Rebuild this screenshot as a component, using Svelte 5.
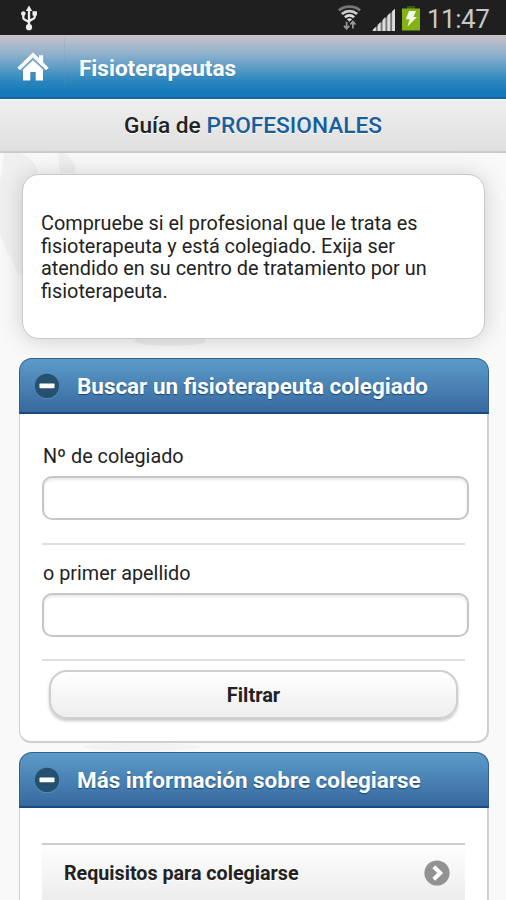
<script lang="ts">
  interface Field {
    id: string;
    label: string;
  }

  const fields: Field[] = [
    { id: 'numero', label: 'Nº de colegiado' },
    { id: 'apellido', label: 'o primer apellido' },
  ];

  const links = ['Requisitos para colegiarse'];

  let values: Record<string, string> = $state({ numero: '', apellido: '' });
</script>

{#snippet minus()}
  <svg class="minus" viewBox="0 0 26 26" aria-hidden="true">
    <circle cx="13" cy="13.8" r="12.2" fill="#82acd0" opacity="0.6" />
    <circle cx="13" cy="13" r="12.2" fill="#26506f" />
    <rect x="5.5" y="10.6" width="15" height="4.6" rx="0.6" fill="#fff" />
  </svg>
{/snippet}

<div class="screen">
  <div class="status">
    <svg class="usb" viewBox="0 0 18 26" aria-hidden="true">
      <g fill="none" stroke="#eee" stroke-width="2.3">
        <path d="M9 5v17M3.3 9v4.2c0 2 5.7 2.2 5.7 5M14.7 8v4.2c0 2-5.7 2.5-5.7 5" />
      </g>
      <path d="M9 0.5 12.2 6H5.8z" fill="#eee" />
      <circle cx="3.3" cy="8.5" r="2.3" fill="#eee" />
      <rect x="12.5" y="6.2" width="4.4" height="4.4" fill="#eee" />
      <circle cx="9" cy="22.2" r="3.1" fill="#eee" />
    </svg>
    <svg class="wifi" viewBox="0 0 26 27" aria-hidden="true">
      <g fill="none" stroke-width="2.8">
        <path d="M2 6.2C8 .9 18 .9 24 6.2" stroke="#777" />
        <path d="M5 9.8c4.8-4 11.2-4 16 0" stroke="#ccc" />
        <path d="M8.2 13.2c3-2.5 6.6-2.5 9.6 0" stroke="#ddd" />
      </g>
      <path d="M10.3 15.2q2.7-2 5.4 0L13 18z" fill="#ddd" />
      <path d="M10 18v6M7.3 22.2l2.7 3 2.7-3M16.5 25v-6M13.8 20.8l2.7-3 2.7 3" fill="none" stroke="#999" stroke-width="1.8" />
    </svg>
    <svg class="signal" viewBox="0 0 24 24" aria-hidden="true">
      <path d="M0 24 24 1v23z" fill="#777" />
      <path d="M1 24v-1.5l3-3V24zM6 24v-6.5l3-3V24zM11 24V12.5l3-3V24zM16 24V8l3-3v19zM21 24V3.5l3-2.8V24z" fill="#ddd" />
    </svg>
    <svg class="battery" viewBox="0 0 20 25" aria-hidden="true">
      <rect x="6" y="0" width="8" height="3" fill="#41551c" />
      <rect x="1" y="2.5" width="18" height="22" fill="#82b314" />
      <path d="M8 5h7l-2.6 6H16L6.5 20.5l2-7.3H4.8z" fill="#f2f7e6" />
    </svg>
    <span class="clock">11:47</span>
  </div>

  <header class="topbar">
    <svg class="home" viewBox="0 0 32 30" aria-hidden="true">
      <path d="M22 3.2h4.2v8L22 7.4z" fill="#fff" />
      <path d="M16 8.2 26 17.6v10.9h-7.3v-8.6h-5.4v8.6H6V17.6z" fill="#fff" />
      <path d="M1.6 17 16 3l14.4 14" fill="none" stroke="#fff" stroke-width="3.8" />
      <path d="M4.2 18.6 16 7.2l11.8 11.4" fill="none" stroke="#9dc0da" stroke-width="0.7" />
    </svg>
    <span class="divider"></span>
    <h1 class="app-name">Fisioterapeutas</h1>
  </header>

  <h2 class="page-title">Guía de <span>PROFESIONALES</span></h2>

  <main class="content">
    <svg class="watermark" viewBox="0 0 240 600" aria-hidden="true">
      <path d="M4 0h16q18 8 18 22l-4 110-16-12L4 92 0 80V30z" fill="#f0f0f0" />
      <path d="M58 0h8l9 12v8H60z" fill="#f0f0f0" />
      <ellipse cx="170" cy="188" rx="36" ry="5" fill="#ededed" />
      <ellipse cx="142" cy="594" rx="58" ry="4" fill="#f2f2f2" />
    </svg>

    <p class="intro">
      Compruebe si el profesional que le trata es fisioterapeuta y está colegiado. Exija ser
      atendido en su centro de tratamiento por un fisioterapeuta.
    </p>

    <section class="panel">
      <h3 class="panel-head">{@render minus()}Buscar un fisioterapeuta colegiado</h3>
      <form class="panel-body search">
        {#each fields as field (field.id)}
          <div class="field">
            <label for={field.id}>{field.label}</label>
            <input id={field.id} type="text" bind:value={values[field.id]} />
          </div>
        {/each}
        <button type="button">Filtrar</button>
      </form>
    </section>

    <section class="panel">
      <h3 class="panel-head">{@render minus()}Más información sobre colegiarse</h3>
      <div class="panel-body">
        <ul class="links">
          {#each links as link (link)}
            <li>
              <span>{link}</span>
              <svg class="chevron" viewBox="0 0 26 26" aria-hidden="true">
                <circle cx="13" cy="13" r="12.6" fill="#929292" />
                <path d="m9.8 6.8 6.4 6.2-6.4 6.2" fill="none" stroke="#fff" stroke-width="4" />
              </svg>
            </li>
          {/each}
        </ul>
      </div>
    </section>
  </main>
</div>

<style>
  :global(body) {
    margin: 0;
    overflow: hidden;
  }

  .screen {
    height: 900px;
    overflow: hidden;
    box-sizing: border-box;
    background: #f9f9f9;
    color: #222;
    font-family: Roboto, 'Liberation Sans', sans-serif;
  }

  h1,
  h2,
  h3,
  p,
  ul {
    margin: 0;
    padding: 0;
  }

  .status {
    display: flex;
    align-items: center;
    height: 35px;
    padding: 0 17px 0 20px;
    background: #1f1f1f;
  }
  .usb {
    width: 18px;
    height: 26px;
    margin-right: auto;
  }
  .wifi {
    width: 25px;
    height: 27px;
    margin-right: 10px;
  }
  .signal {
    width: 23px;
    height: 23px;
    margin: 4px 6px 0 0;
  }
  .battery {
    width: 20px;
    height: 25px;
    margin-top: 1px;
  }
  .clock {
    width: 62px;
    margin: 3px 0 0 6px;
    font-size: 26px;
    line-height: 30px;
    letter-spacing: -0.5px;
    white-space: nowrap;
    color: #c8c8c8;
  }

  .topbar {
    display: flex;
    align-items: center;
    height: 64px;
    padding-left: 17px;
    box-sizing: border-box;
    background: linear-gradient(#c6c2c8 2%, #8fb2cd 30%, #2885bd 76%, #147abb 94%);
    border-bottom: 2px solid #1764a0;
  }
  .home {
    width: 32px;
    height: 30px;
    margin-top: 2px;
    filter: drop-shadow(0 1px 1px #3679a566);
  }
  .divider {
    align-self: stretch;
    width: 1px;
    margin: 2px 14px 12px 15px;
    background: #6f96b42e;
  }
  .app-name {
    margin-top: 5px;
    font-size: 22.55px;
    font-weight: 700;
    color: #fff;
    text-shadow: 0 1px 1px #3474a088;
  }

  .page-title {
    height: 54px;
    box-sizing: border-box;
    border-top: 1px solid #fff;
    border-bottom: 2px solid #c9c9c9;
    background: linear-gradient(#efefef, #dfdfdf);
    font-size: 22.7px;
    line-height: 51px;
    font-weight: 500;
    text-align: center;
    text-shadow: 0 1px 0 #fff;
  }
  .page-title span {
    color: #185d9c;
  }

  .content {
    position: relative;
    padding: 21px 17px 0 19px;
  }
  .watermark {
    position: absolute;
    top: 0;
    left: 0;
    width: 240px;
    height: 600px;
  }

  .intro {
    position: relative;
    height: 165px;
    margin: 0 4px 0 3px;
    padding: 38px 36px 0 18px;
    box-sizing: border-box;
    border: 1px solid #c9c9c9;
    border-radius: 17px;
    background: #fff;
    box-shadow: 0 1px 24px #0000002e;
    font-size: 19.85px;
    line-height: 22.5px;
  }

  .panel {
    position: relative;
    margin-top: 19px;
  }
  .panel + .panel {
    margin-top: 9px;
  }
  .panel-head {
    display: flex;
    align-items: center;
    height: 56px;
    padding-left: 14px;
    box-sizing: border-box;
    border: 1px solid #345f86;
    border-bottom: 2px solid #164a80;
    border-radius: 13px 13px 0 0;
    background: linear-gradient(#5b9bc9, #38699f);
    font-size: 22.45px;
    font-weight: 700;
    color: #fff;
    text-shadow: 0 1px 1px #174675;
  }
  .minus {
    width: 26px;
    height: 26px;
    margin-right: 17px;
  }
  .panel-body {
    padding: 0 22px;
    border: solid #cfcfcf;
    border-width: 0 2px 2px 1px;
    border-radius: 0 0 12px 12px;
    background: #fff;
  }

  .search {
    height: 326px;
    padding-top: 1px;
  }
  .field {
    height: 100px;
    padding-top: 28px;
    border-bottom: 2px solid #dfdfdf;
  }
  .field + .field {
    height: 99px;
    padding-top: 15px;
  }
  .field label {
    display: block;
    height: 33px;
    padding-left: 1px;
    font-size: 19.8px;
    line-height: 27px;
  }
  .field input {
    display: block;
    width: calc(100% + 4px);
    height: 44px;
    padding: 0 10px;
    box-sizing: border-box;
    border: 2px solid #c6c6c6;
    border-radius: 10px;
    outline: none;
    background: #fff;
    box-shadow: inset 0 2px 3px #00000018;
    font: 20px Roboto, 'Liberation Sans', sans-serif;
  }
  .search button {
    display: block;
    width: calc(100% - 14px);
    height: 49px;
    margin: 9px 7px 0;
    padding: 0;
    border: 2px solid #cfcfcf;
    border-radius: 18px;
    background: linear-gradient(#fff, #eee);
    box-shadow: 0 2px 3px #00000038;
    color: #222;
    font: 700 20px Roboto, 'Liberation Sans', sans-serif;
  }

  .links {
    padding: 35px 0 30px;
    list-style: none;
  }
  .links li {
    display: flex;
    align-items: center;
    justify-content: space-between;
    height: 56px;
    padding: 0 15px 0 22px;
    border-top: 2px solid #cecece;
    background: linear-gradient(#fdfdfd, #ededed);
    font-size: 19.7px;
    font-weight: 700;
    text-shadow: 0 1px 0 #fff;
  }
  .chevron {
    width: 26px;
    height: 26px;
  }
</style>
